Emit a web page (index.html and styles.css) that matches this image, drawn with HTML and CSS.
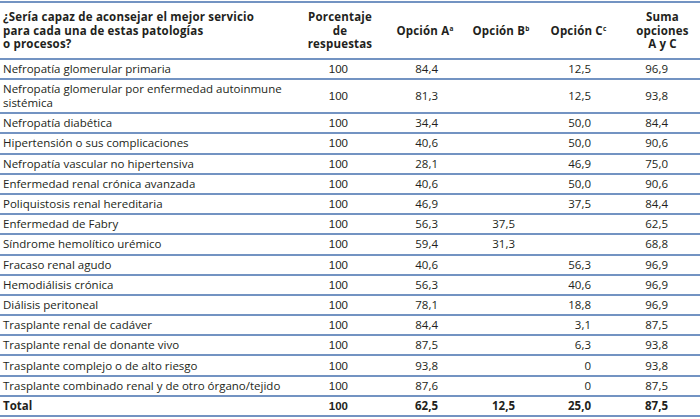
FILE: index.html
```html
<!DOCTYPE html>
<html lang="es">
<head>
<meta charset="utf-8">
<link rel="stylesheet" href="styles.css">
</head>
<body>
<table class="tbl">
  <colgroup>
    <col class="c1"><col class="c2"><col class="c3"><col class="c4"><col class="c5"><col class="c6">
  </colgroup>
  <thead>
    <tr>
      <th class="q">¿Sería capaz de aconsejar el mejor servicio<br>para cada una de estas patologías<br>o procesos?</th>
      <th class="h">Porcentaje<br>de<br>respuestas</th>
      <th class="h">Opción A<sup>a</sup></th>
      <th class="h">Opción B<sup>b</sup></th>
      <th class="h">Opción C<sup>c</sup></th>
      <th class="h">Suma<br>opciones<br>A y C</th>
    </tr>
  </thead>
  <tbody>
    <tr><td class="n">Nefropatía glomerular primaria</td><td class="p">100</td><td class="a">84,4</td><td class="b"></td><td class="c">12,5</td><td class="s">96,9</td></tr>
    <tr class="tall"><td class="n">Nefropatía glomerular por enfermedad autoinmune<br>sistémica</td><td class="p">100</td><td class="a">81,3</td><td class="b"></td><td class="c">12,5</td><td class="s">93,8</td></tr>
    <tr><td class="n">Nefropatía diabética</td><td class="p">100</td><td class="a">34,4</td><td class="b"></td><td class="c">50,0</td><td class="s">84,4</td></tr>
    <tr><td class="n">Hipertensión o sus complicaciones</td><td class="p">100</td><td class="a">40,6</td><td class="b"></td><td class="c">50,0</td><td class="s">90,6</td></tr>
    <tr><td class="n">Nefropatía vascular no hipertensiva</td><td class="p">100</td><td class="a">28,1</td><td class="b"></td><td class="c">46,9</td><td class="s">75,0</td></tr>
    <tr><td class="n">Enfermedad renal crónica avanzada</td><td class="p">100</td><td class="a">40,6</td><td class="b"></td><td class="c">50,0</td><td class="s">90,6</td></tr>
    <tr><td class="n">Poliquistosis renal hereditaria</td><td class="p">100</td><td class="a">46,9</td><td class="b"></td><td class="c">37,5</td><td class="s">84,4</td></tr>
    <tr><td class="n">Enfermedad de Fabry</td><td class="p">100</td><td class="a">56,3</td><td class="b">37,5</td><td class="c"></td><td class="s">62,5</td></tr>
    <tr><td class="n">Síndrome hemolítico urémico</td><td class="p">100</td><td class="a">59,4</td><td class="b">31,3</td><td class="c"></td><td class="s">68,8</td></tr>
    <tr><td class="n">Fracaso renal agudo</td><td class="p">100</td><td class="a">40,6</td><td class="b"></td><td class="c">56,3</td><td class="s">96,9</td></tr>
    <tr><td class="n">Hemodiálisis crónica</td><td class="p">100</td><td class="a">56,3</td><td class="b"></td><td class="c">40,6</td><td class="s">96,9</td></tr>
    <tr><td class="n">Diálisis peritoneal</td><td class="p">100</td><td class="a">78,1</td><td class="b"></td><td class="c">18,8</td><td class="s">96,9</td></tr>
    <tr><td class="n">Trasplante renal de cadáver</td><td class="p">100</td><td class="a">84,4</td><td class="b"></td><td class="c">3,1</td><td class="s">87,5</td></tr>
    <tr><td class="n">Trasplante renal de donante vivo</td><td class="p">100</td><td class="a">87,5</td><td class="b"></td><td class="c">6,3</td><td class="s">93,8</td></tr>
    <tr><td class="n">Trasplante complejo o de alto riesgo</td><td class="p">100</td><td class="a">93,8</td><td class="b"></td><td class="c">0</td><td class="s">93,8</td></tr>
    <tr><td class="n">Trasplante combinado renal y de otro órgano/tejido</td><td class="p">100</td><td class="a">87,6</td><td class="b"></td><td class="c">0</td><td class="s">87,5</td></tr>
    <tr class="total"><td class="n">Total</td><td class="p">100</td><td class="a">62,5</td><td class="b">12,5</td><td class="c">25,0</td><td class="s">87,5</td></tr>
  </tbody>
</table>
</body>
</html>
```
FILE: styles.css
```css
html, body {
  margin: 0;
  padding: 0;
  background: #ffffff;
}
body {
  padding-top: 1px;
}
.tbl {
  width: 700px;
  border-collapse: collapse;
  table-layout: fixed;
  font-family: "Open Sans", "Noto Sans", sans-serif;
  font-size: 11.5px;
  color: #231f20;
  border-top: 2px solid #7393c2;
}
.c1 { width: 300px; }
.c2 { width: 80px; }
.c3 { width: 90px; }
.c4 { width: 62px; }
.c5 { width: 93px; }
.c6 { width: 75px; }

th {
  font-weight: bold;
  font-size: 11.5px;
  letter-spacing: 0.18px;
  line-height: 13.6px;
  height: 55px;
  padding: 0;
  vertical-align: middle;
  border-bottom: 2px solid #7393c2;
}
th.q {
  text-align: left;
  padding-left: 3px;
}
th.h {
  text-align: center;
}
th sup {
  font-size: 6.5px;
  vertical-align: 4px;
  line-height: 0;
}
td {
  height: 18.2px;
  padding: 0;
  line-height: 14px;
  vertical-align: middle;
  border-bottom: 2px solid #7393c2;
  white-space: nowrap;
}
tr.tall td {
  height: 32px;
}
td.n {
  text-align: left;
  padding-left: 3px;
}
td.p {
  text-align: right;
  padding-right: 32px;
  font-family: "Liberation Sans", Arial, sans-serif;
}
td.a { text-align: right; padding-right: 32px; }
td.b { text-align: right; padding-right: 17px; }
td.c { text-align: right; padding-right: 34px; }
td.s { text-align: right; padding-right: 32px; }
tr.total td {
  font-weight: bold;
}
```
